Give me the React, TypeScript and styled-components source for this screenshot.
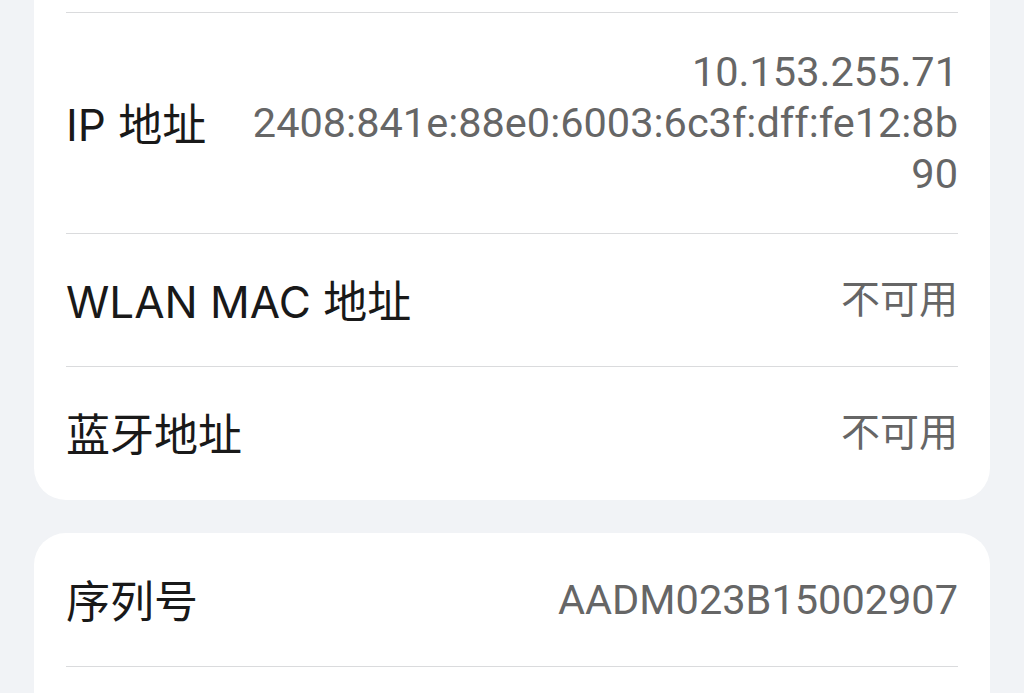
import React from "react";
import styled, { createGlobalStyle } from "styled-components";

const GlobalStyle = createGlobalStyle`
  html, body {
    margin: 0;
    padding: 0;
    background: #f1f3f6;
    overflow: hidden;
  }
`;

type Item = { label: string; value: string[] };

const networkItems: Item[] = [
  {
    label: "IP 地址",
    value: ["10.153.255.71", "2408:841e:88e0:6003:6c3f:dff:fe12:8b", "90"],
  },
  { label: "WLAN MAC 地址", value: ["不可用"] },
  { label: "蓝牙地址", value: ["不可用"] },
];

const deviceItems: Item[] = [{ label: "序列号", value: ["AADM023B15002907"] }];

const isCjk = (s: string) => /[\u4e00-\u9fff]/.test(s);

function InfoRow({ item, first }: { item: Item; first?: boolean }) {
  return (
    <Row $tall={item.value.length > 1} $first={first}>
      <Label>{item.label}</Label>
      <Value>
        {item.value.map((line) => (
          <Line key={line} $cjk={isCjk(line)}>
            {line}
          </Line>
        ))}
      </Value>
    </Row>
  );
}

export default function App() {
  return (
    <>
      <GlobalStyle />
      <Page>
        <Card $cutTop>
          {networkItems.map((item) => (
            <InfoRow key={item.label} item={item} />
          ))}
        </Card>
        <Card>
          {deviceItems.map((item, i) => (
            <InfoRow key={item.label} item={item} first={i === 0} />
          ))}
          <Row />
        </Card>
      </Page>
    </>
  );
}

const Page = styled.div`
  display: flex;
  flex-direction: column;
  gap: 33px;
  padding: 0 34px;
  height: 693px;
  overflow: hidden;
`;

const Card = styled.div<{ $cutTop?: boolean }>`
  background: #ffffff;
  border-radius: ${(p) => (p.$cutTop ? "0 0 32px 32px" : "32px")};
  padding: ${(p) => (p.$cutTop ? "12px 32px 1px" : "0 32px")};
  flex-shrink: 0;
`;

const Row = styled.div<{ $tall?: boolean; $first?: boolean }>`
  display: flex;
  align-items: center;
  justify-content: space-between;
  gap: 40px;
  min-height: 133px;
  padding: ${(p) => (p.$tall ? "33px 0 34px" : "0")};
  box-sizing: border-box;
  border-top: ${(p) => (p.$first ? "none" : "1px solid #dadbdd")};
`;

const Label = styled.div`
  font-family: Inter, "Noto Sans CJK SC", sans-serif;
  font-size: 44px;
  color: #191919;
  white-space: nowrap;
  margin-top: -2px;
`;

const Value = styled.div`
  display: flex;
  flex-direction: column;
  align-items: flex-end;
  font-family: Roboto, "Noto Sans CJK SC", sans-serif;
  line-height: 51px;
  color: #666666;
  text-align: right;
`;

const Line = styled.span<{ $cjk?: boolean }>`
  white-space: nowrap;
  font-size: ${(p) => (p.$cjk ? "39px" : "41.5px")};
`;
